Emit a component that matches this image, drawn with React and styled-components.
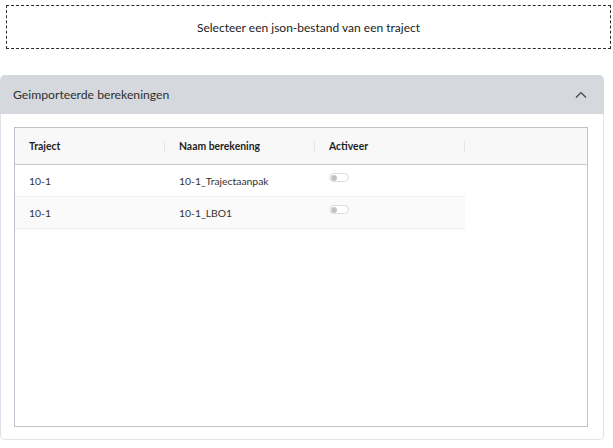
import React from "react";
import styled, { createGlobalStyle } from "styled-components";

const GlobalStyle = createGlobalStyle`
  html, body {
    margin: 0;
    padding: 0;
    background: #ffffff;
  }
  body {
    font-family: Lato, "Liberation Sans", sans-serif;
    color: #333333;
  }
`;

const rows = [
  { traject: "10-1", naam: "10-1_Trajectaanpak" },
  { traject: "10-1", naam: "10-1_LBO1" }
];

const App = () => {
  return (
    <Page>
      <GlobalStyle />
      <DropZone>Selecteer een json-bestand van een traject</DropZone>
      <Panel>
        <PanelHeader>
          Geimporteerde berekeningen
          <svg width="12" height="8" viewBox="0 0 12 8">
            <path d="M1 6.5 L6 1.5 L11 6.5" fill="none" stroke="#444" strokeWidth="1.2" />
          </svg>
        </PanelHeader>
        <PanelBody>
          <TableBox>
            <HeadRow>
              <HeadCell>Traject</HeadCell>
              <HeadCell>Naam berekening</HeadCell>
              <HeadCell>Activeer</HeadCell>
              <HeadFill />
            </HeadRow>
            {rows.map((r, i) => (
              <Row key={i} striped={i % 2 === 1}>
                <Cell>{r.traject}</Cell>
                <Cell>{r.naam}</Cell>
                <Cell>
                  <Switch>
                    <Knob />
                  </Switch>
                </Cell>
              </Row>
            ))}
          </TableBox>
        </PanelBody>
      </Panel>
    </Page>
  );
};

export default App;

const Page = styled.div`
  width: 613px;
  height: 448px;
  box-sizing: border-box;
  padding-top: 5px;
  display: flex;
  flex-direction: column;
`;

const DropZone = styled.div`
  margin: 0 2px 0 6px;
  height: 44px;
  box-sizing: border-box;
  border: 1px dashed #2b2b2b;
  display: flex;
  align-items: center;
  justify-content: center;
  font-size: 12px;
  color: #222;
`;

const Panel = styled.div`
  margin-top: 26px;
  width: 604px;
  display: flex;
  flex-direction: column;
`;

const PanelHeader = styled.div`
  height: 39px;
  box-sizing: border-box;
  background: #d5d8dc;
  border-radius: 5px 5px 0 0;
  padding: 0 17px 0 13px;
  display: flex;
  align-items: center;
  justify-content: space-between;
  font-size: 12.2px;
  color: #2f2f2f;
`;

const PanelBody = styled.div`
  box-sizing: border-box;
  border: 1px solid #e2e3e6;
  border-top: none;
  border-radius: 0 0 5px 5px;
  padding: 13px 15px 12px 13px;
`;

const TableBox = styled.div`
  height: 300px;
  box-sizing: border-box;
  border: 1px solid #bfc2ca;
  display: flex;
  flex-direction: column;
`;

const HeadRow = styled.div`
  height: 37px;
  box-sizing: border-box;
  display: flex;
  background: #f8f8f9;
  border-bottom: 1px solid #c5c8d0;
`;

const HeadCell = styled.div`
  position: relative;
  width: 150px;
  flex-shrink: 0;
  box-sizing: border-box;
  padding-left: 14px;
  display: flex;
  align-items: center;
  font-size: 10.4px;
  font-weight: 700;
  color: #1f1f1f;
  &:after {
    content: "";
    position: absolute;
    right: 0;
    top: 13px;
    width: 1px;
    height: 11px;
    background: #e3e5ea;
  }
`;

const HeadFill = styled.div`
  flex: 1;
`;

const Row = styled.div`
  width: 450px;
  height: 32px;
  box-sizing: border-box;
  display: flex;
  background: ${({ striped }) => (striped ? "#fafafa" : "#ffffff")};
  border-bottom: 1px solid ${({ striped }) => (striped ? "#e9ebf0" : "#eff0f4")};
`;

const Cell = styled.div`
  width: 150px;
  flex-shrink: 0;
  box-sizing: border-box;
  padding-left: 14px;
  display: flex;
  align-items: center;
  font-size: 10.4px;
  color: #333;
`;

const Switch = styled.span`
  width: 20px;
  height: 9px;
  box-sizing: border-box;
  border: 1px solid #dcdcdc;
  border-radius: 5px;
  background: #fff;
  display: flex;
  align-items: center;
  padding-left: 1px;
  margin-top: -6px;
`;

const Knob = styled.span`
  width: 6px;
  height: 6px;
  border-radius: 50%;
  background: #c3c3c3;
`;
